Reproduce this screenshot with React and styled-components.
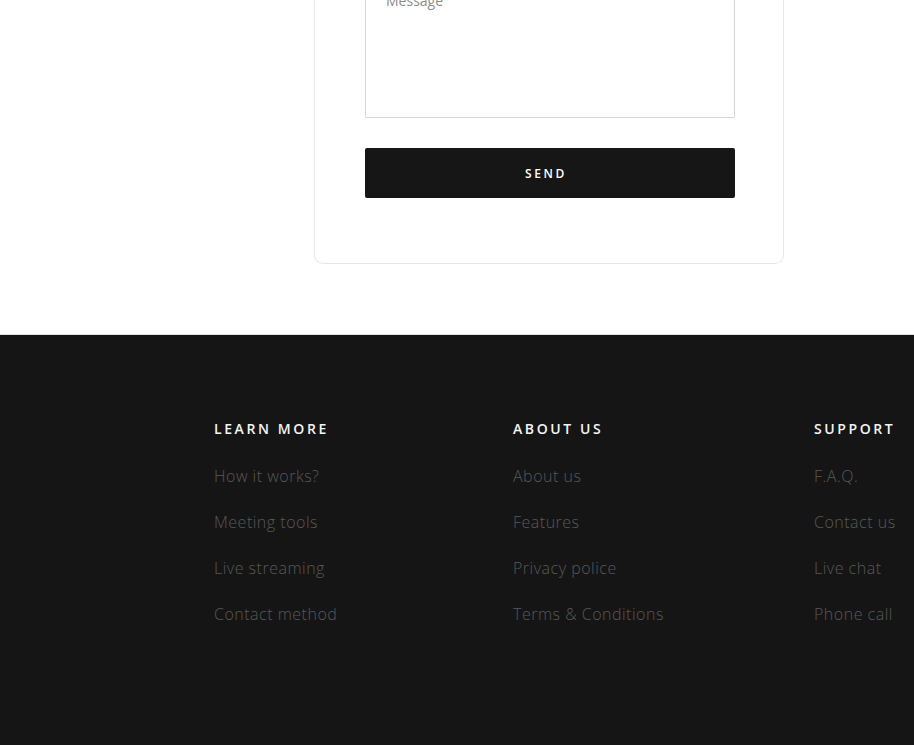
import React from "react";
import styled, { createGlobalStyle } from "styled-components";

const GlobalStyle = createGlobalStyle`
  html, body {
    margin: 0;
    padding: 0;
    background: #fff;
    font-family: "Open Sans", "Liberation Sans", sans-serif;
    overflow: hidden;
  }
`;

const columns = [
  {
    title: "LEARN MORE",
    links: ["How it works?", "Meeting tools", "Live streaming", "Contact method"],
  },
  {
    title: "ABOUT US",
    links: ["About us", "Features", "Privacy police", "Terms & Conditions"],
  },
  {
    title: "SUPPORT",
    links: ["F.A.Q.", "Contact us", "Live chat", "Phone call"],
  },
];

export default function App() {
  return (
    <>
      <GlobalStyle />
      <StyledContactSection>
        <StyledCard>
          <StyledTextarea placeholder="Message" />
          <StyledSendButton>SEND</StyledSendButton>
        </StyledCard>
      </StyledContactSection>
      <StyledFooter>
        <StyledFooterGrid>
          {columns.map((col) => (
            <StyledColumn key={col.title}>
              <StyledColumnTitle>{col.title}</StyledColumnTitle>
              {col.links.map((link) => (
                <StyledLink key={link} href="#">
                  {link}
                </StyledLink>
              ))}
            </StyledColumn>
          ))}
        </StyledFooterGrid>
      </StyledFooter>
    </>
  );
}

const StyledContactSection = styled.section`
  display: flex;
  padding-left: 314px;
  padding-bottom: 70px;
  margin-top: -40px;
`;

const StyledCard = styled.div`
  width: 370px;
  padding: 0 48px 65px 50px;
  border: 1px solid #e6e6e6;
  border-top: none;
  border-radius: 0 0 9px 9px;
  display: flex;
  flex-direction: column;
  gap: 30px;
`;

const StyledTextarea = styled.textarea`
  box-sizing: border-box;
  width: 370px;
  height: 158px;
  padding: 30px 20px;
  border: 1px solid #d6d6d2;
  border-radius: 1px;
  resize: none;
  font-family: inherit;
  font-size: 14px;
  color: #333;
  outline: none;

  &::placeholder {
    color: #8c8c8c;
  }
`;

const StyledSendButton = styled.button`
  width: 370px;
  height: 50px;
  border: none;
  border-radius: 2px;
  background: #161616;
  color: #fff;
  font-family: inherit;
  font-size: 12px;
  font-weight: 600;
  letter-spacing: 2.6px;
  padding: 0 8px 0 0;
  cursor: pointer;
`;

const StyledFooter = styled.footer`
  background: #151515;
  border-top: 1px solid #e2e2e2;
  height: 420px;
  padding-top: 85px;
  box-sizing: border-box;
`;

const StyledFooterGrid = styled.div`
  display: grid;
  grid-template-columns: 299px 301px 100px;
  padding-left: 214px;
`;

const StyledColumn = styled.div`
  display: flex;
  flex-direction: column;
  align-items: flex-start;
`;

const StyledColumnTitle = styled.h4`
  margin: 0 0 28px;
  color: #f4f4f4;
  font-size: 14px;
  font-weight: 600;
  letter-spacing: 2.6px;
  line-height: 18px;
  white-space: nowrap;
`;

const StyledLink = styled.a`
  color: #585858;
  font-size: 16px;
  font-weight: 300;
  letter-spacing: 0.5px;
  line-height: 20px;
  margin-bottom: 26px;
  text-decoration: none;
  white-space: nowrap;
`;
